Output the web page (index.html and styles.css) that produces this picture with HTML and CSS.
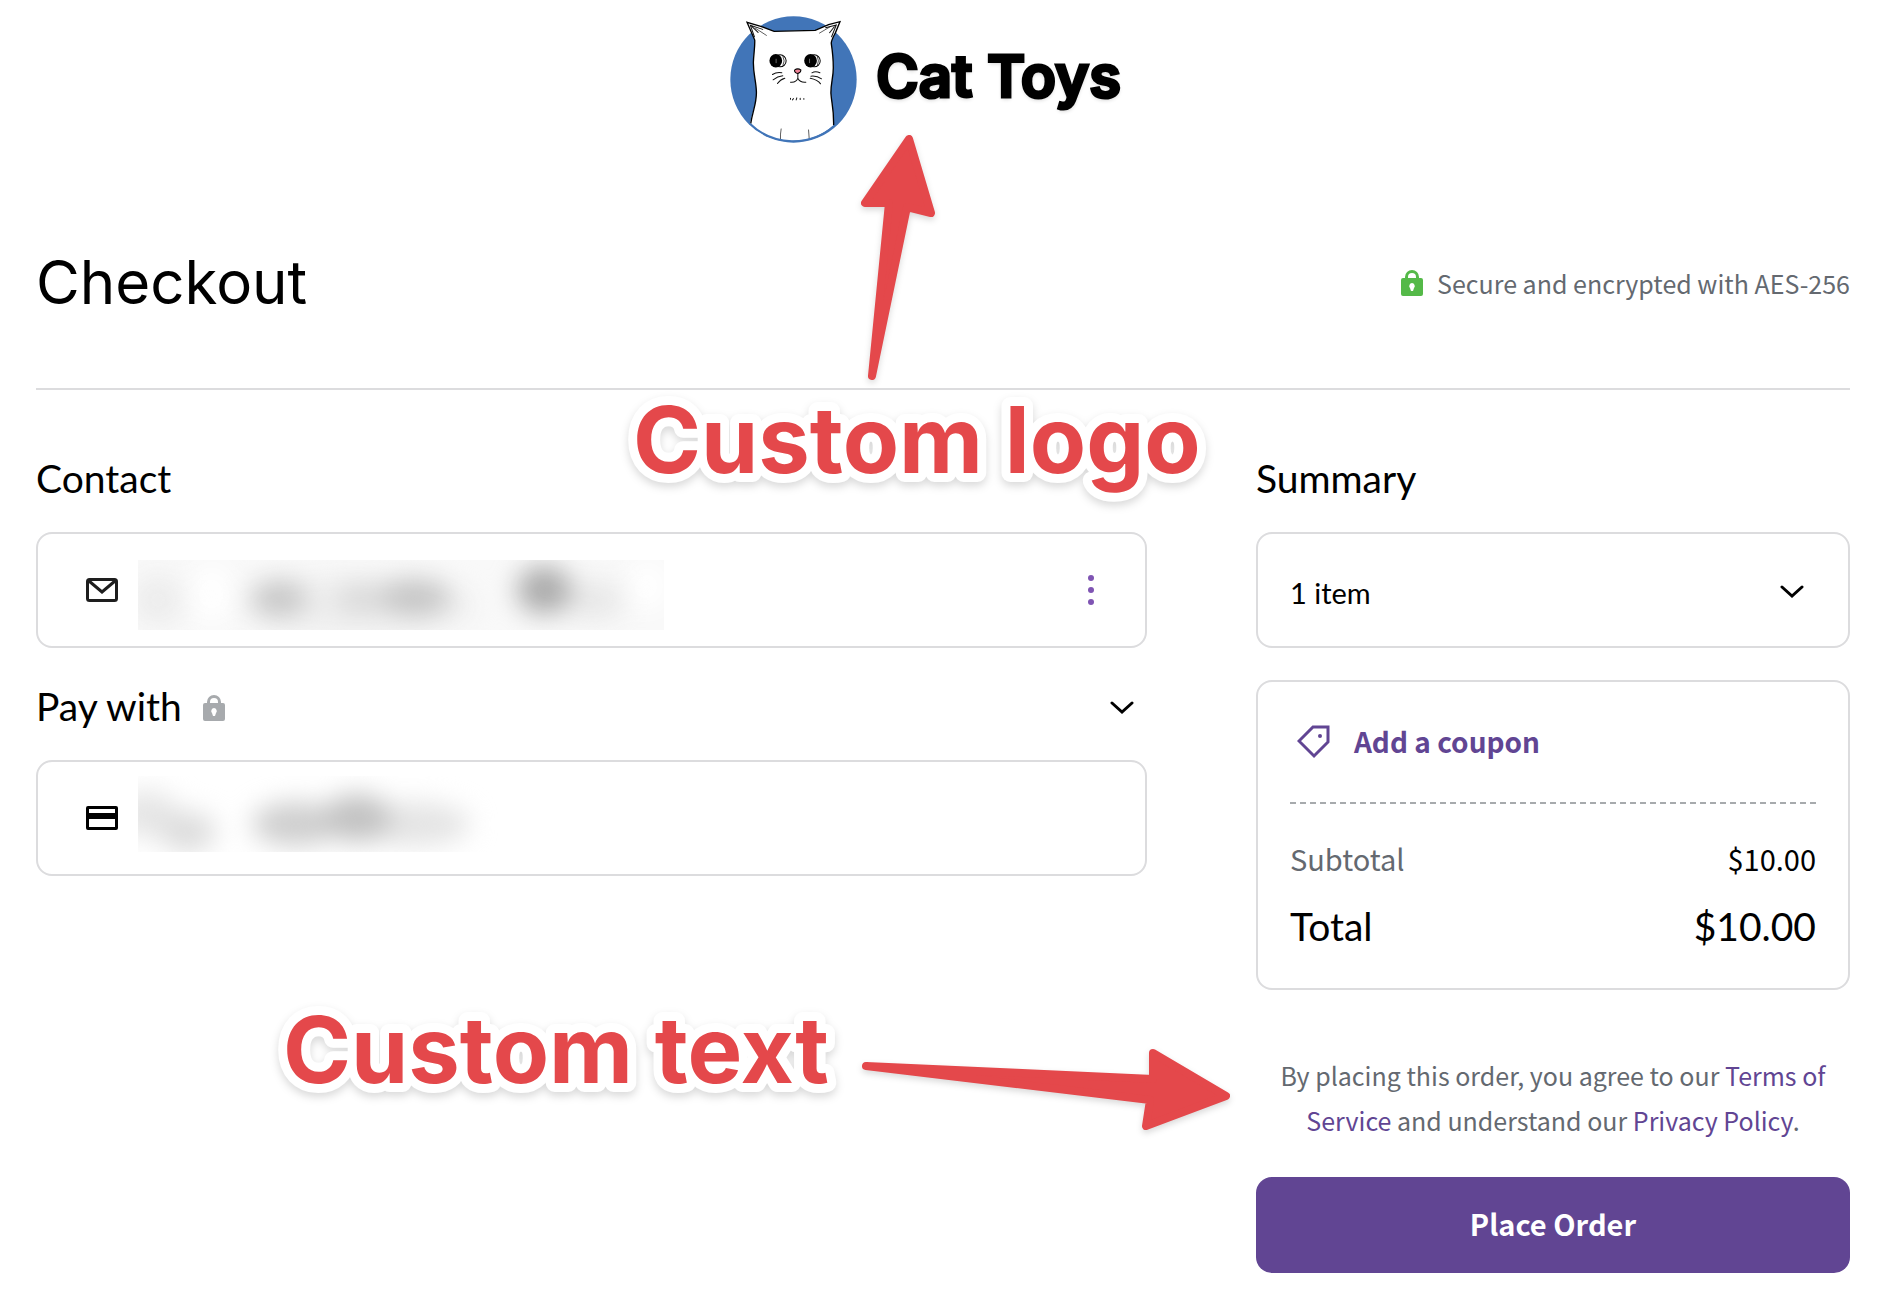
FILE: index.html
```html
<!DOCTYPE html>
<html lang="en">
<head>
    <meta charset="UTF-8">
    <meta name="viewport" content="width=device-width, initial-scale=1.0">
    <title>Checkout</title>
    <link rel="stylesheet" href="styles.css">
</head>
<body>
    <div class="page">
        <header class="site-header">
            <svg class="cat-logo" viewBox="30 48 380 380" aria-hidden="true">
                <circle cx="220" cy="238" r="189" fill="#4175b8"/>
                <path d="M90 370C98 330 110 310 109 275C108 240 99 220 100 185C101 160 105 140 104 120L81 67L122 79L162 94L285 91L325 74L359 65L346 97C338 112 333 120 333 130C336 150 339 170 339 200C340 230 331 250 332 280C334 310 341 325 340 375A184 184 0 0 1 90 370Z" fill="#fff"/>
                <path d="M92 370C98 330 110 310 109 275C108 240 99 220 100 185C101 160 105 140 104 120L81 67L122 79L162 94L285 91L325 74L359 65L346 97C338 112 333 120 333 130C336 150 339 170 339 200C340 230 331 250 332 280C334 310 341 325 340 375" fill="none" stroke="#000" stroke-width="4"/>
                <g fill="none" stroke="#111" stroke-width="3" stroke-linecap="round">
                    <path d="M103 110L91 76L128 88M96 80L114 97M334 110L348 75L316 83M342 80L328 98"/>
                    <path d="M105 84L139 106M330 80L298 99" stroke-width="2"/>
                    <path d="M157 223Q170 215 185 218M159 239Q172 229 188 227M172 250Q180 238 194 234M299 218Q286 212 275 218M304 236Q290 226 272 228M301 251Q292 238 270 234"/>
                    <path d="M233 220V234Q228 248 211 246M233 234Q240 248 257 246"/>
                    <path d="M211 297V294M217 299L220 295M228 299L230 293M240 298V294M251 297V295"/>
                    <path d="M183 386Q180 402 181 415M265 389L267 415" stroke-width="2"/>
                </g>
                <ellipse cx="180" cy="182" rx="18" ry="18" fill="#fff" stroke="#000" stroke-width="3"/>
                <ellipse cx="167" cy="182" rx="19" ry="20"/>
                <ellipse cx="282" cy="182" rx="18" ry="18" fill="#fff" stroke="#000" stroke-width="3"/>
                <ellipse cx="271" cy="182" rx="19" ry="20"/>
                <path d="M168 176V189M268 176V189" stroke="#999" stroke-width="2"/>
                <path d="M188 168Q196 182 188 197M291 168Q298 182 291 197" fill="none" stroke="#000" stroke-width="2"/>
                <path d="M223 210Q232 203 242 209Q243 216 233 220Q223 218 223 210Z" fill="#f08297" stroke="#000" stroke-width="3"/>
                <path d="M90 370A186 186 0 0 0 342 376" fill="none" stroke="#4175b8" stroke-width="5"/>
            </svg>
            <span class="site-name">Cat Toys</span>
        </header>

        <div class="title-bar">
            <h1>Checkout</h1>
            <p class="secure">
                <svg class="lock" viewBox="0 0 22 26" aria-hidden="true">
                    <path fill-rule="evenodd" d="M2 8H4V7A7 7 0 0 1 18 7V8H20Q22 8 22 10V24Q22 26 20 26H2Q0 26 0 24V10Q0 8 2 8ZM7 8H15V7A4 4 0 0 0 7 7ZM11 13A3 3 0 0 0 9 18L10 21H12L13 18A3 3 0 0 0 11 13Z"/>
                </svg>
                Secure and encrypted with AES-256
            </p>
        </div>

        <main class="checkout">
            <div class="details">
                <section>
                    <h2>Contact</h2>
                    <div class="card field">
                        <svg class="field-icon" viewBox="0 0 32 24" aria-hidden="true">
                            <rect x="1.5" y="1.5" width="29" height="21" rx="2" fill="none" stroke="#1e1e1e" stroke-width="3"/>
                            <path d="M3 3L16 14L29 3" fill="none" stroke="#1e1e1e" stroke-width="3"/>
                        </svg>
                        <svg class="redacted redacted-email" viewBox="0 0 526 70" aria-hidden="true">
                            <rect width="526" height="70" fill="#f9f9f9"/>
                            <g class="smudge">
                                <ellipse cx="20" cy="40" rx="26" ry="26" fill="#ececec"/>
                                <ellipse cx="74" cy="34" rx="20" ry="30" fill="#fff"/>
                                <ellipse cx="220" cy="46" rx="116" ry="30" fill="#eee"/>
                                <ellipse cx="141" cy="38" rx="28" ry="18" fill="#c6c6c6"/>
                                <ellipse cx="222" cy="38" rx="24" ry="16" fill="#dadada"/>
                                <ellipse cx="277" cy="37" rx="36" ry="18" fill="#c4c4c4"/>
                                <ellipse cx="454" cy="40" rx="34" ry="20" fill="#e8e8e8"/>
                                <ellipse cx="406" cy="30" rx="27" ry="24" fill="#aaa"/>
                                <ellipse cx="510" cy="26" rx="20" ry="26" fill="#fff"/>
                            </g>
                        </svg>
                        <button class="menu-button" aria-label="Contact options">
                            <svg width="6" height="30" viewBox="0 0 6 30"><circle cx="3" cy="3" r="3"/><circle cx="3" cy="15" r="3"/><circle cx="3" cy="27" r="3"/></svg>
                        </button>
                    </div>
                </section>
                <section>
                    <div class="section-head">
                        <h2>Pay with</h2>
                        <svg class="lock lock-muted" viewBox="0 0 22 26" aria-hidden="true">
                            <path fill-rule="evenodd" d="M2 8H4V7A7 7 0 0 1 18 7V8H20Q22 8 22 10V24Q22 26 20 26H2Q0 26 0 24V10Q0 8 2 8ZM7 8H15V7A4 4 0 0 0 7 7ZM11 13A3 3 0 0 0 9 18L10 21H12L13 18A3 3 0 0 0 11 13Z"/>
                        </svg>
                        <button class="toggle" aria-label="Show payment methods">
                            <svg class="chevron" viewBox="0 0 24 14"><path d="M2 2L12 11L22 2"/></svg>
                        </button>
                    </div>
                    <div class="card field">
                        <svg class="field-icon" viewBox="0 0 32 24" aria-hidden="true">
                            <path fill-rule="evenodd" d="M2 0H30Q32 0 32 2V22Q32 24 30 24H2Q0 24 0 22V2Q0 0 2 0ZM3 3V7H29V3ZM3 13V21H29V13Z"/>
                        </svg>
                        <svg class="redacted redacted-card" viewBox="0 0 400 76" aria-hidden="true">
                            <g class="smudge">
                                <ellipse cx="8" cy="38" rx="32" ry="24" fill="#e6e6e6"/>
                                <ellipse cx="50" cy="56" rx="28" ry="20" fill="#dcdcdc"/>
                                <ellipse cx="276" cy="48" rx="56" ry="22" fill="#e4e4e4"/>
                                <ellipse cx="158" cy="48" rx="44" ry="22" fill="#cecece"/>
                                <ellipse cx="219" cy="42" rx="34" ry="24" fill="#c2c2c2"/>
                            </g>
                        </svg>
                    </div>
                </section>
            </div>

            <aside>
                <h2>Summary</h2>
                <button class="card items">
                    <span>1 item</span>
                    <svg class="chevron" viewBox="0 0 24 14"><path d="M2 2L12 11L22 2"/></svg>
                </button>
                <div class="card totals">
                    <button class="coupon">
                        <svg width="34" height="34" viewBox="0 0 34 34" aria-hidden="true">
                            <path d="M16 2H31V17L17 31L2 16Z" fill="none" stroke="currentColor" stroke-width="3"/>
                            <circle cx="23" cy="11" r="2" fill="currentColor"/>
                        </svg>
                        <span>Add a coupon</span>
                    </button>
                    <dl>
                        <div class="line">
                            <dt>Subtotal</dt>
                            <dd>$10.00</dd>
                        </div>
                        <div class="line line-total">
                            <dt>Total</dt>
                            <dd>$10.00</dd>
                        </div>
                    </dl>
                </div>
                <p class="terms">By placing this order, you agree to our <a href="#">Terms of Service</a> and understand our <a href="#">Privacy Policy</a>.</p>
                <button class="place-order">Place Order</button>
            </aside>
        </main>
    </div>

    <!-- callouts drawn over the page -->
    <svg class="callouts" width="1240" height="1150" viewBox="0 0 1240 1150">
        <path class="arrow" d="M909 139L865 203H889L872 376L907 207L931 213Z"/>
        <text class="callout-text" x="633" y="473">Custom logo</text>
        <text class="callout-text" x="283" y="1083">Custom text</text>
        <path class="arrow" d="M866 1066L1153 1079V1053L1226 1096L1146 1126L1150 1100Z"/>
    </svg>
</body>
</html>
```
FILE: styles.css
```css
* {
    box-sizing: border-box;
}
body {
    margin: 0;
    background-color: #fff;
    color: #000;
    font-family: "Noto Sans CJK SC", "Noto Sans", sans-serif;
}
h1, h2, p, dl, dd {
    margin: 0;
    font-weight: 400;
}
button {
    font: inherit;
    color: inherit;
    background: none;
    border: none;
    padding: 0;
    cursor: pointer;
}
a {
    color: #614593;
    text-decoration: none;
}
.page {
    padding: 16px 50px 40px 36px;
}

/* header */
.site-header {
    display: flex;
    justify-content: center;
    align-items: center;
    gap: 19px;
    padding-right: 35px;
}
.cat-logo {
    width: 127px;
    height: 127px;
}
.site-name {
    padding-bottom: 8px;
    font-family: Inter, sans-serif;
    font-size: 58px;
    line-height: 72px;
    font-weight: 600;
    -webkit-text-stroke: 3px #000;
    stroke-linejoin: round;
    text-shadow: 0 2px 4px rgba(0, 0, 0, 0.2);
}
.title-bar {
    display: flex;
    justify-content: space-between;
    align-items: center;
    margin-top: 95px;
    padding-bottom: 70px;
    border-bottom: 2px solid #dcdcde;
}
h1 {
    padding-top: 8px;
    font-family: Inter, sans-serif;
    font-size: 60px;
    line-height: 72px;
}
.secure {
    display: flex;
    align-items: center;
    gap: 14px;
    padding-top: 10px;
    font-size: 25px;
    color: #646970;
}
.lock {
    width: 22px;
    height: 26px;
    fill: #54b948;
}
.lock-muted {
    margin-top: 4px;
    fill: #a7aaad;
}

/* columns */
.checkout {
    display: grid;
    grid-template-columns: 1.87fr 1fr;
    gap: 109px;
    padding-top: 64px;
}
.details {
    display: flex;
    flex-direction: column;
    gap: 34px;
}
h2 {
    font-family: Lato, sans-serif;
    font-size: 39px;
    line-height: 48px;
}
.section-head {
    display: flex;
    align-items: center;
    gap: 21px;
}
.toggle {
    margin-left: auto;
    padding: 12px 13px 8px;
}
.chevron {
    display: block;
    width: 24px;
    height: 14px;
    fill: none;
    stroke: #000;
    stroke-width: 3;
    stroke-linecap: round;
}
.card {
    border: 2px solid #dcdcde;
    border-radius: 16px;
    margin-top: 30px;
}
.field {
    display: flex;
    align-items: center;
    height: 116px;
    padding: 0 51px 0 48px;
}
.field-icon {
    width: 32px;
    height: 24px;
}
.redacted {
    margin-left: 20px;
    overflow: hidden;
}
.redacted-email {
    width: 526px;
    height: 70px;
    margin-top: 10px;
}
.redacted-card {
    width: 400px;
    height: 76px;
    margin-bottom: 8px;
}
.smudge {
    filter: blur(13px);
}
.menu-button {
    margin-left: auto;
    line-height: 0;
    fill: #7f54b3;
}

/* summary */
.items {
    display: flex;
    justify-content: space-between;
    align-items: center;
    width: 100%;
    height: 116px;
    padding: 4px 44px 0 32px;
    font-family: Lato, sans-serif;
    font-size: 29px;
}
.totals {
    margin-top: 32px;
    padding: 0 32px 38px;
    font-size: 29px;
}
.coupon {
    display: flex;
    align-items: center;
    gap: 23px;
    width: 100%;
    height: 120px;
    padding-left: 7px;
    font-size: 28px;
    font-weight: 700;
    color: #614593;
}
.coupon span {
    padding-bottom: 2px;
}
.totals dl {
    border-top: 2px dashed #a7aaad;
    padding-top: 34px;
}
.line {
    display: flex;
    justify-content: space-between;
    line-height: 40px;
}
.line dt {
    color: #646970;
}
.line-total {
    margin-top: 24px;
    font-family: Lato, sans-serif;
    font-size: 39px;
    line-height: 48px;
}
.line-total dt {
    color: #000;
}
.terms {
    margin-top: 63px;
    padding: 0 16px;
    font-size: 25px;
    line-height: 45px;
    text-align: center;
    color: #646970;
}
.place-order {
    width: 100%;
    height: 96px;
    margin-top: 34px;
    padding-bottom: 4px;
    border-radius: 16px;
    background-color: #614593;
    color: #fff;
    font-size: 29px;
    font-weight: 700;
}

/* callouts */
.callouts {
    position: absolute;
    top: 0;
    left: 0;
    pointer-events: none;
}
.callout-text {
    font-family: Inter, sans-serif;
    font-size: 92px;
    font-weight: 700;
    fill: #e4484b;
    stroke: #fff;
    stroke-width: 18px;
    stroke-linejoin: round;
    paint-order: stroke;
    filter: drop-shadow(0 4px 4px rgba(0, 0, 0, 0.15));
}
.arrow {
    fill: #e4484b;
    stroke: #e4484b;
    stroke-width: 8px;
    stroke-linejoin: round;
    filter: drop-shadow(0 3px 3px rgba(0, 0, 0, 0.15));
}
```
